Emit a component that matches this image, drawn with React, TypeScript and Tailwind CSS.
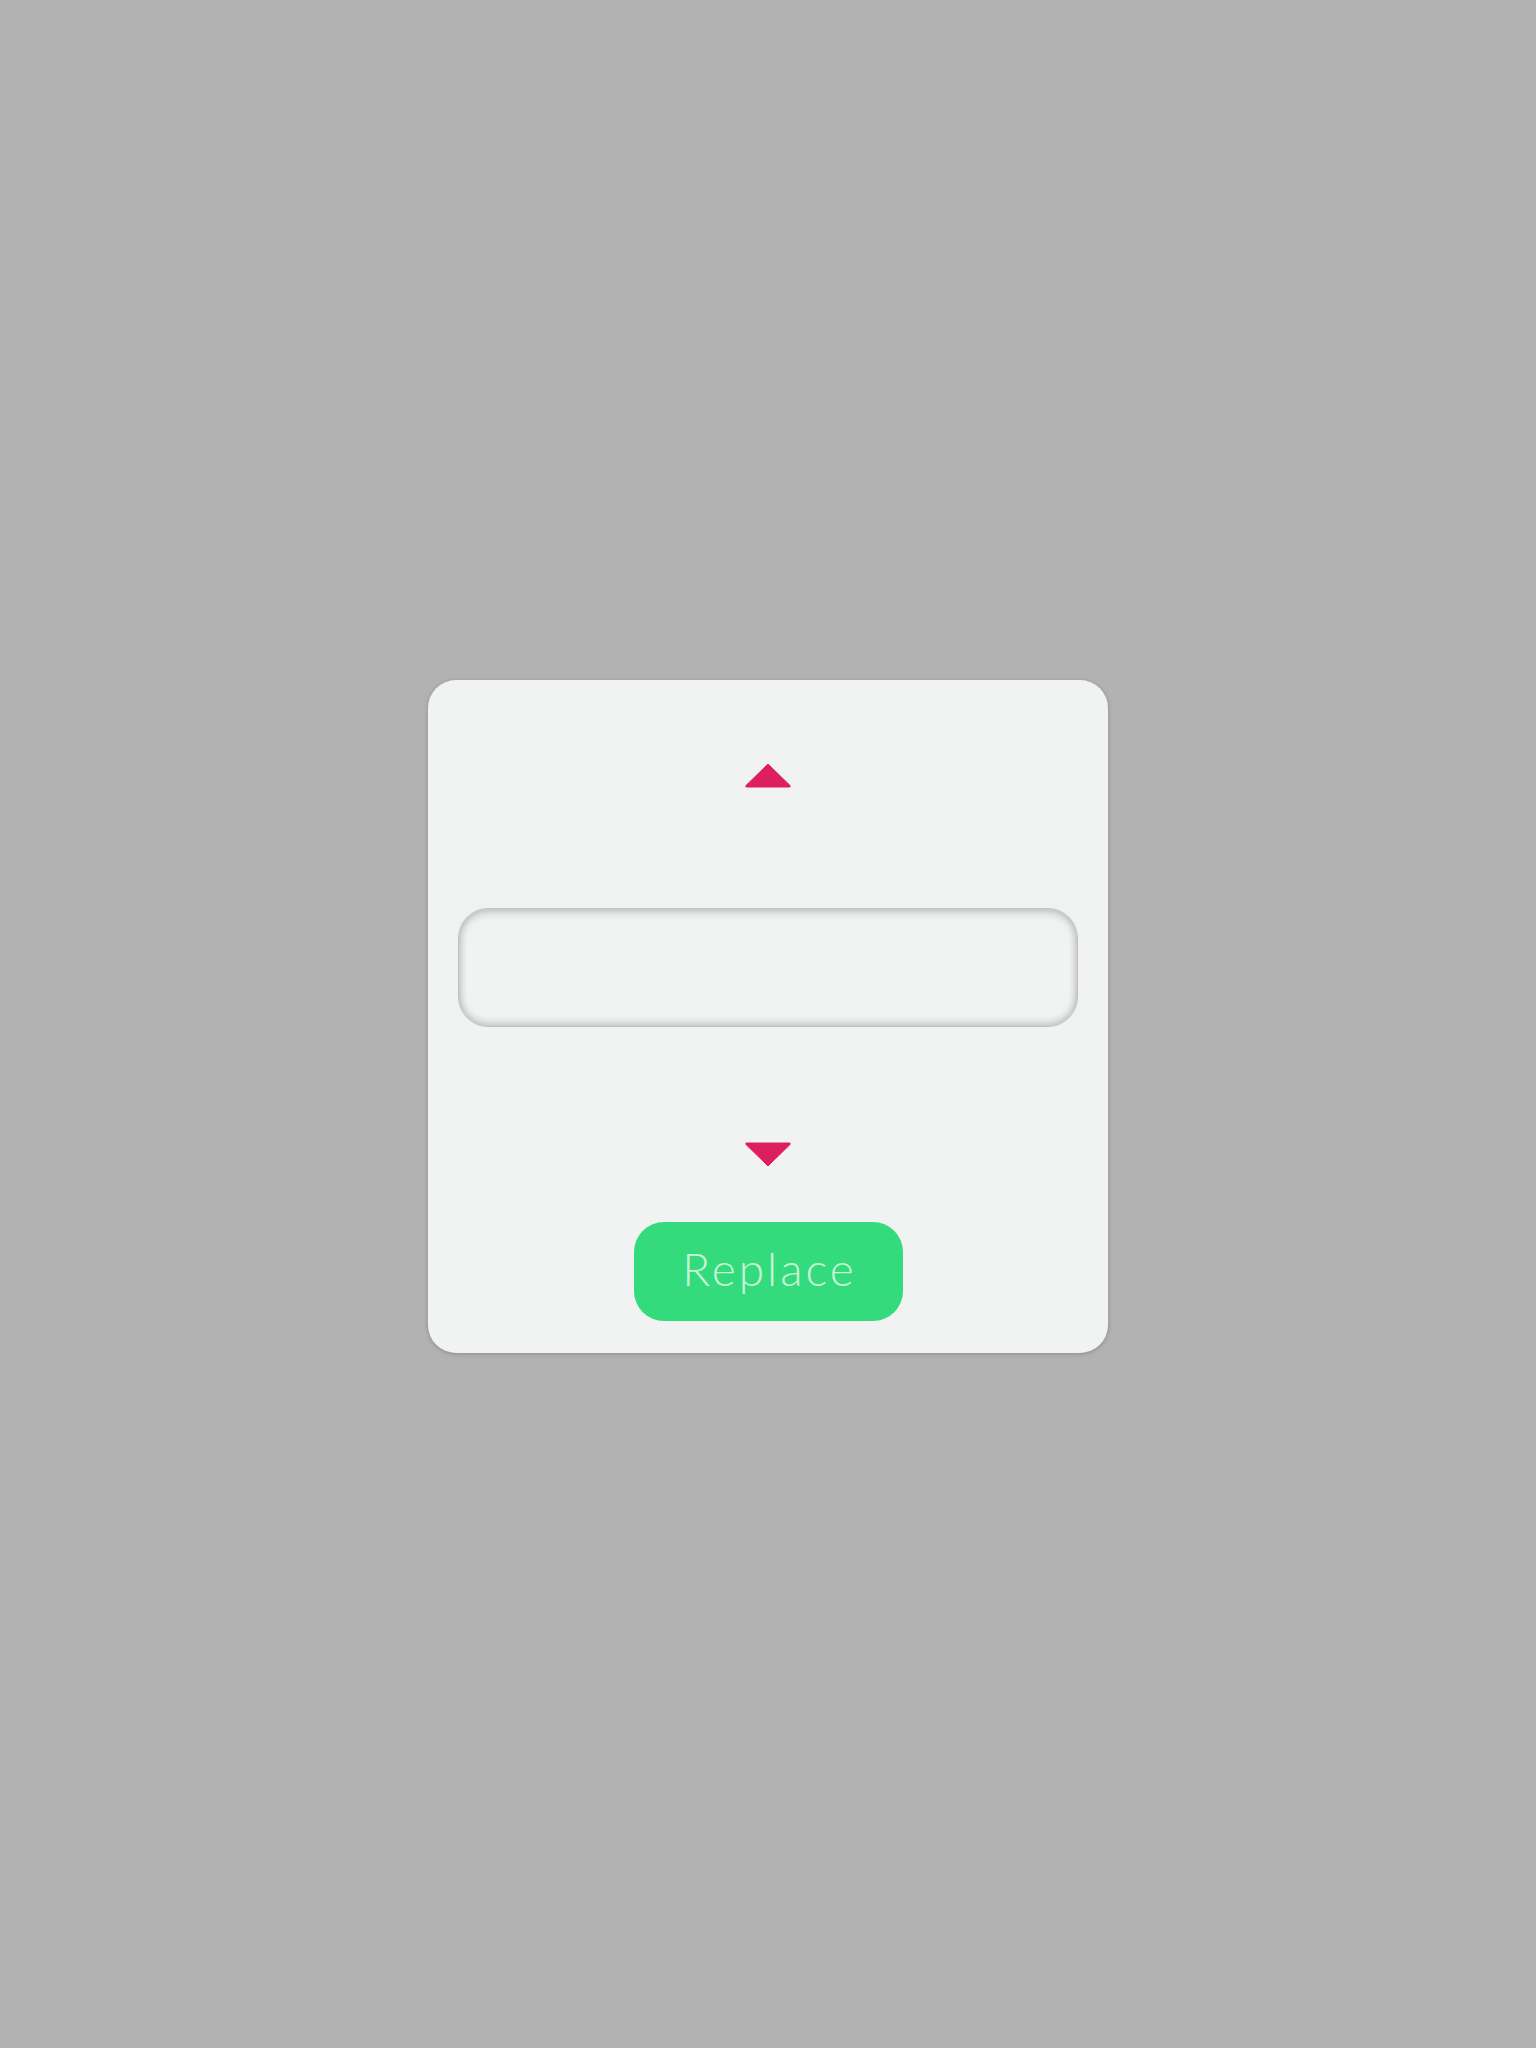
export default function App() {
  return (
    <div className="min-h-[2048px] w-full bg-[#b2b2b2] flex justify-center" style={{ fontFamily: "Lato, 'Open Sans', sans-serif" }}>
      <div className="mt-[680px] h-[673px] w-[680px] rounded-[28px] bg-[#f1f3f2] shadow-[0_1px_4px_rgba(0,0,0,0.22)] flex flex-col items-center pt-[83px]">
        <button type="button" aria-label="Up" className="block">
          <svg width="46" height="25" viewBox="0 0 46 25">
            <path d="M23 1 L45 22.5 Q46 24 44 24 L2 24 Q0 24 1 22.5 Z" fill="#dc1f5f" stroke="#dc1f5f" strokeWidth="1" strokeLinejoin="round" />
          </svg>
        </button>
        <input
          type="text"
          className="mt-[120px] h-[119px] w-[620px] rounded-[30px] border border-[#c2c2c2] bg-[#f1f3f2] shadow-[inset_0_3px_8px_rgba(0,0,0,0.2),inset_0_-3px_8px_rgba(0,0,0,0.16)] outline-none"
        />
        <button type="button" aria-label="Down" className="mt-[115px] block">
          <svg width="46" height="25" viewBox="0 0 46 25">
            <path d="M23 24 L45 2.5 Q46 1 44 1 L2 1 Q0 1 1 2.5 Z" fill="#dc1f5f" stroke="#dc1f5f" strokeWidth="1" strokeLinejoin="round" />
          </svg>
        </button>
        <button
          type="button"
          className="mt-[55px] h-[99px] w-[269px] rounded-[30px] bg-[#34db7c] pb-[6px] pl-[3px] text-[46px] font-light tracking-[3px] text-[#c8f5d7] leading-none"
        >
          Replace
        </button>
      </div>
    </div>
  );
}
